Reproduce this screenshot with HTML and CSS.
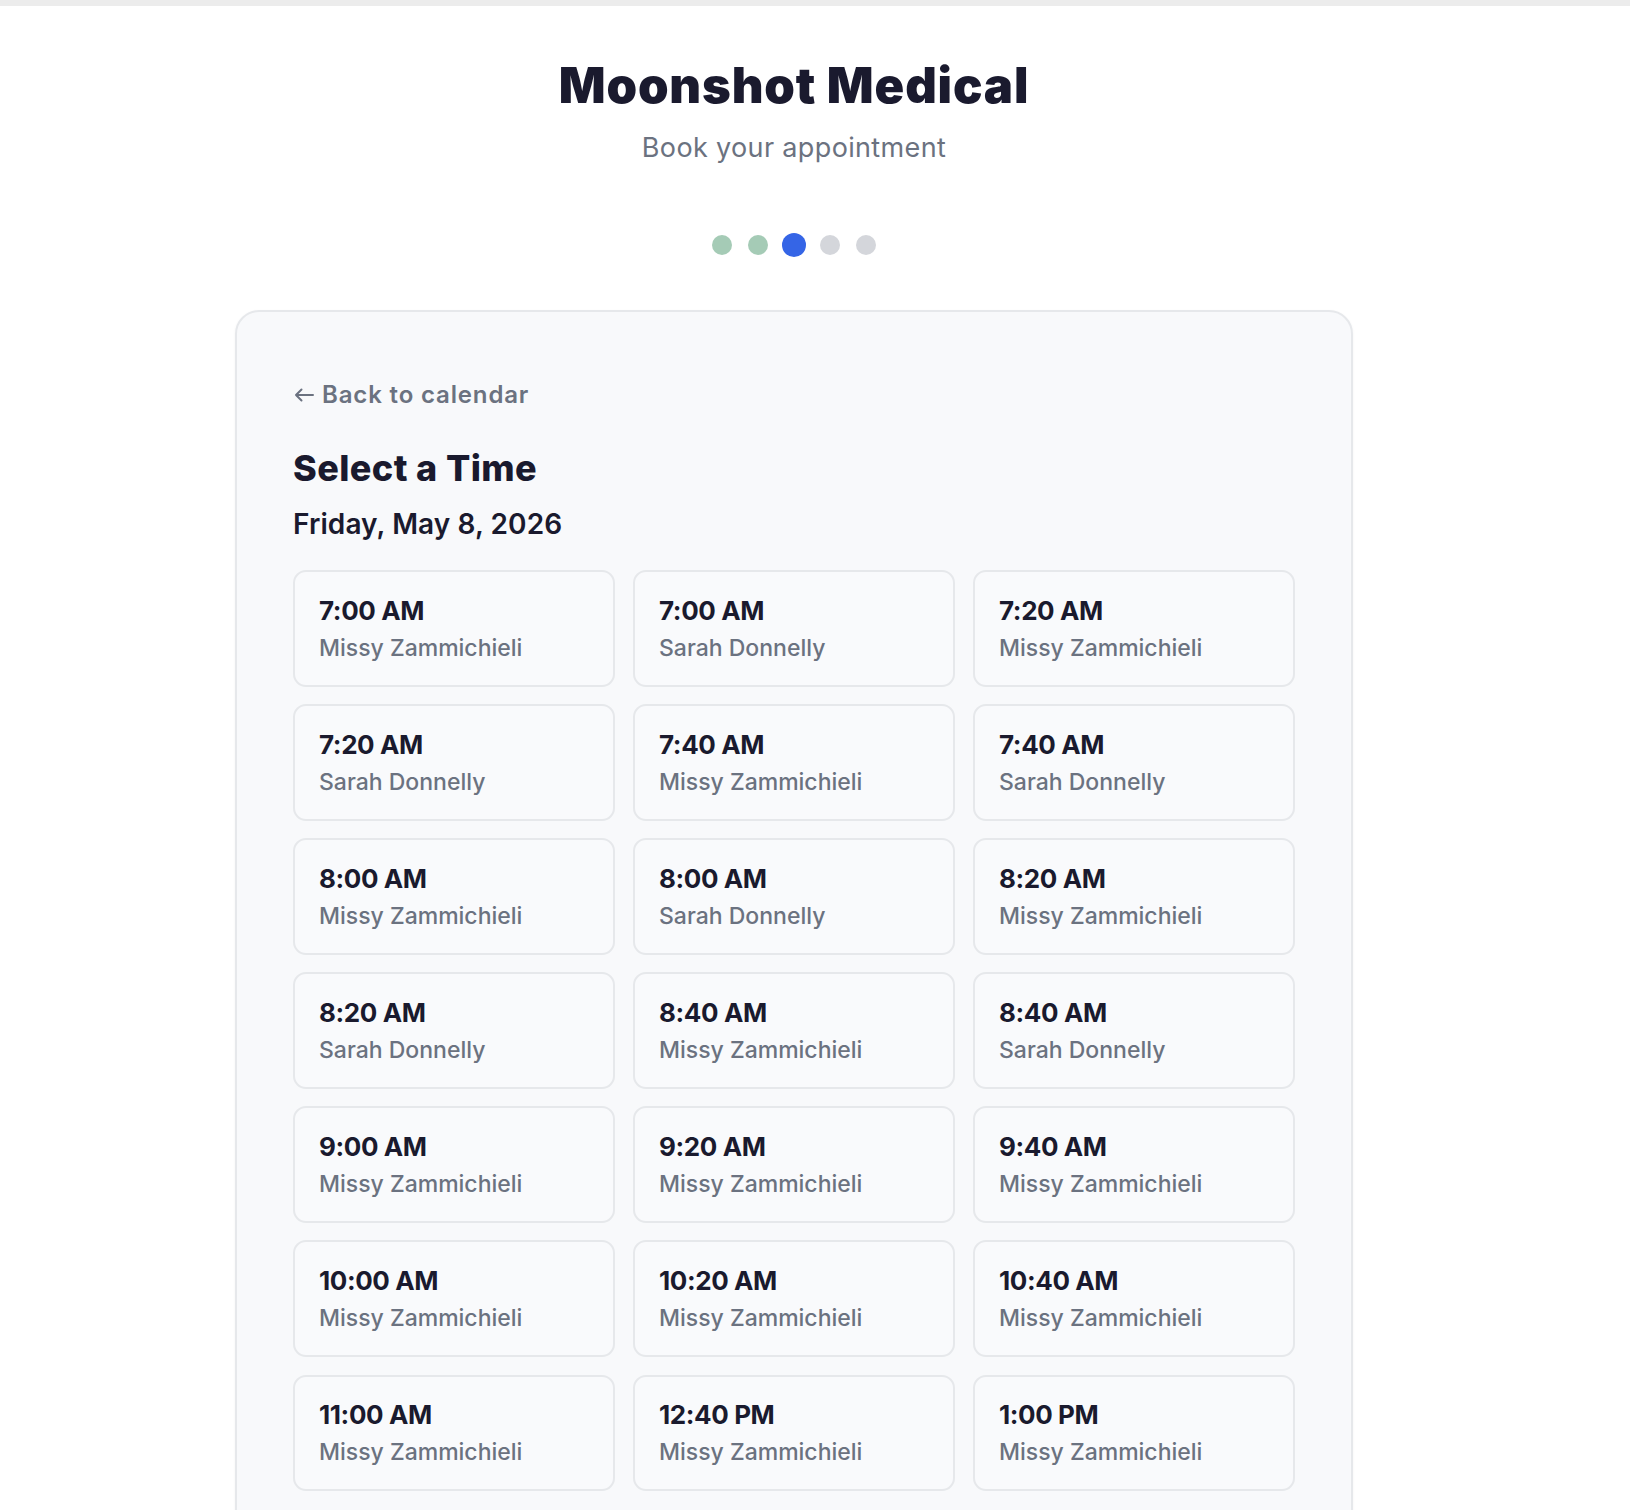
FILE: index.html
```html
<!DOCTYPE html>
<html lang="en">
<head>
<meta charset="utf-8">
<title>Moonshot Medical – Book your appointment</title>
<link rel="stylesheet" href="styles.css">
</head>
<body>
<div class="topbar"></div>
<div class="page">
  <header class="header">
    <h1 class="brand">Moonshot Medical</h1>
    <p class="tagline">Book your appointment</p>
  </header>

  <div class="steps">
    <span class="dot done"></span>
    <span class="dot done"></span>
    <span class="dot active"></span>
    <span class="dot"></span>
    <span class="dot"></span>
  </div>

  <main class="card">
    <a class="back" href="#">
      <svg class="back-icon" width="20" height="14" viewBox="0 0 20 14" aria-hidden="true">
        <path d="M19 7H2M7.5 1.5L2 7l5.5 5.5" fill="none" stroke="currentColor" stroke-width="2" stroke-linecap="round" stroke-linejoin="round"/>
      </svg>
      <span>Back to calendar</span>
    </a>
    <h2 class="title">Select a Time</h2>
    <p class="date">Friday, May 8, 2026</p>

    <div class="slots">
      <button class="slot"><span class="time">7:00 AM</span><span class="who">Missy Zammichieli</span></button>
      <button class="slot"><span class="time">7:00 AM</span><span class="who">Sarah Donnelly</span></button>
      <button class="slot"><span class="time">7:20 AM</span><span class="who">Missy Zammichieli</span></button>

      <button class="slot"><span class="time">7:20 AM</span><span class="who">Sarah Donnelly</span></button>
      <button class="slot"><span class="time">7:40 AM</span><span class="who">Missy Zammichieli</span></button>
      <button class="slot"><span class="time">7:40 AM</span><span class="who">Sarah Donnelly</span></button>

      <button class="slot"><span class="time">8:00 AM</span><span class="who">Missy Zammichieli</span></button>
      <button class="slot"><span class="time">8:00 AM</span><span class="who">Sarah Donnelly</span></button>
      <button class="slot"><span class="time">8:20 AM</span><span class="who">Missy Zammichieli</span></button>

      <button class="slot"><span class="time">8:20 AM</span><span class="who">Sarah Donnelly</span></button>
      <button class="slot"><span class="time">8:40 AM</span><span class="who">Missy Zammichieli</span></button>
      <button class="slot"><span class="time">8:40 AM</span><span class="who">Sarah Donnelly</span></button>

      <button class="slot"><span class="time">9:00 AM</span><span class="who">Missy Zammichieli</span></button>
      <button class="slot"><span class="time">9:20 AM</span><span class="who">Missy Zammichieli</span></button>
      <button class="slot"><span class="time">9:40 AM</span><span class="who">Missy Zammichieli</span></button>

      <button class="slot"><span class="time">10:00 AM</span><span class="who">Missy Zammichieli</span></button>
      <button class="slot"><span class="time">10:20 AM</span><span class="who">Missy Zammichieli</span></button>
      <button class="slot"><span class="time">10:40 AM</span><span class="who">Missy Zammichieli</span></button>

      <button class="slot"><span class="time">11:00 AM</span><span class="who">Missy Zammichieli</span></button>
      <button class="slot"><span class="time">12:40 PM</span><span class="who">Missy Zammichieli</span></button>
      <button class="slot"><span class="time">1:00 PM</span><span class="who">Missy Zammichieli</span></button>
    </div>
  </main>
</div>
</body>
</html>
```

FILE: styles.css
```css
* { box-sizing: border-box; }

html, body {
  margin: 0;
  padding: 0;
  background: #ffffff;
}

body {
  font-family: Inter, "Noto Sans", "Liberation Sans", sans-serif;
  color: #1a1a2e;
}

.topbar {
  height: 6px;
  background: #ececec;
}

.page {
  width: 1588px;
  padding-bottom: 60px;
}

.header {
  text-align: center;
  padding-top: 50px;
}

.brand {
  margin: 0;
  font-size: 49px;
  line-height: 60px;
  font-weight: 900;
  letter-spacing: 0.85px;
  color: #1a1a2e;
}

.tagline {
  margin: 14px 0 0;
  font-size: 27px;
  line-height: 36px;
  font-weight: 400;
  letter-spacing: 0.35px;
  color: #6b7280;
}

.steps {
  display: flex;
  justify-content: center;
  align-items: center;
  gap: 16px;
  margin-top: 69px;
  height: 20px;
}

.dot {
  width: 20px;
  height: 20px;
  border-radius: 50%;
  background: #d4d6db;
}

.dot.done { background: #a5cbb6; }

.dot.active {
  background: #3565e6;
  transform: scale(1.2);
}

.card {
  display: block;
  width: 1118px;
  margin: 55px auto 0;
  padding: 67px 56px 56px;
  background: #f8f9fb;
  border: 2px solid #e6e8eb;
  border-radius: 24px;
  box-shadow: 0 1px 3px rgba(15, 23, 42, 0.05);
}

.back {
  display: inline-flex;
  align-items: center;
  gap: 8px;
  height: 32px;
  font-size: 24px;
  line-height: 32px;
  font-weight: 600;
  letter-spacing: 0.85px;
  color: #6b7280;
  text-decoration: none;
}

.back-icon {
  flex: none;
  margin-left: 1px;
}

.title {
  margin: 35px 0 0;
  font-size: 36px;
  line-height: 44px;
  font-weight: 800;
  letter-spacing: 0.4px;
  color: #1a1a2e;
}

.date {
  margin: 16px 0 0;
  font-size: 28px;
  line-height: 36px;
  font-weight: 600;
  letter-spacing: 0.1px;
  color: #1a1a2e;
}

.slots {
  display: grid;
  grid-template-columns: repeat(3, 322px);
  gap: 17.6px 18px;
  margin-top: 28px;
}

.slot {
  display: flex;
  flex-direction: column;
  align-items: flex-start;
  height: 116.5px;
  padding: 21.5px 24px 0;
  background: #f9fafc;
  border: 2px solid #e6e8eb;
  border-radius: 13px;
  font-family: inherit;
  text-align: left;
  cursor: pointer;
}

.time {
  font-size: 26px;
  line-height: 34px;
  font-weight: 700;
  letter-spacing: -0.4px;
  color: #1a1a2e;
}

.who {
  margin-top: 4px;
  font-size: 23px;
  line-height: 32px;
  font-weight: 500;
  color: #6b7280;
}
```
